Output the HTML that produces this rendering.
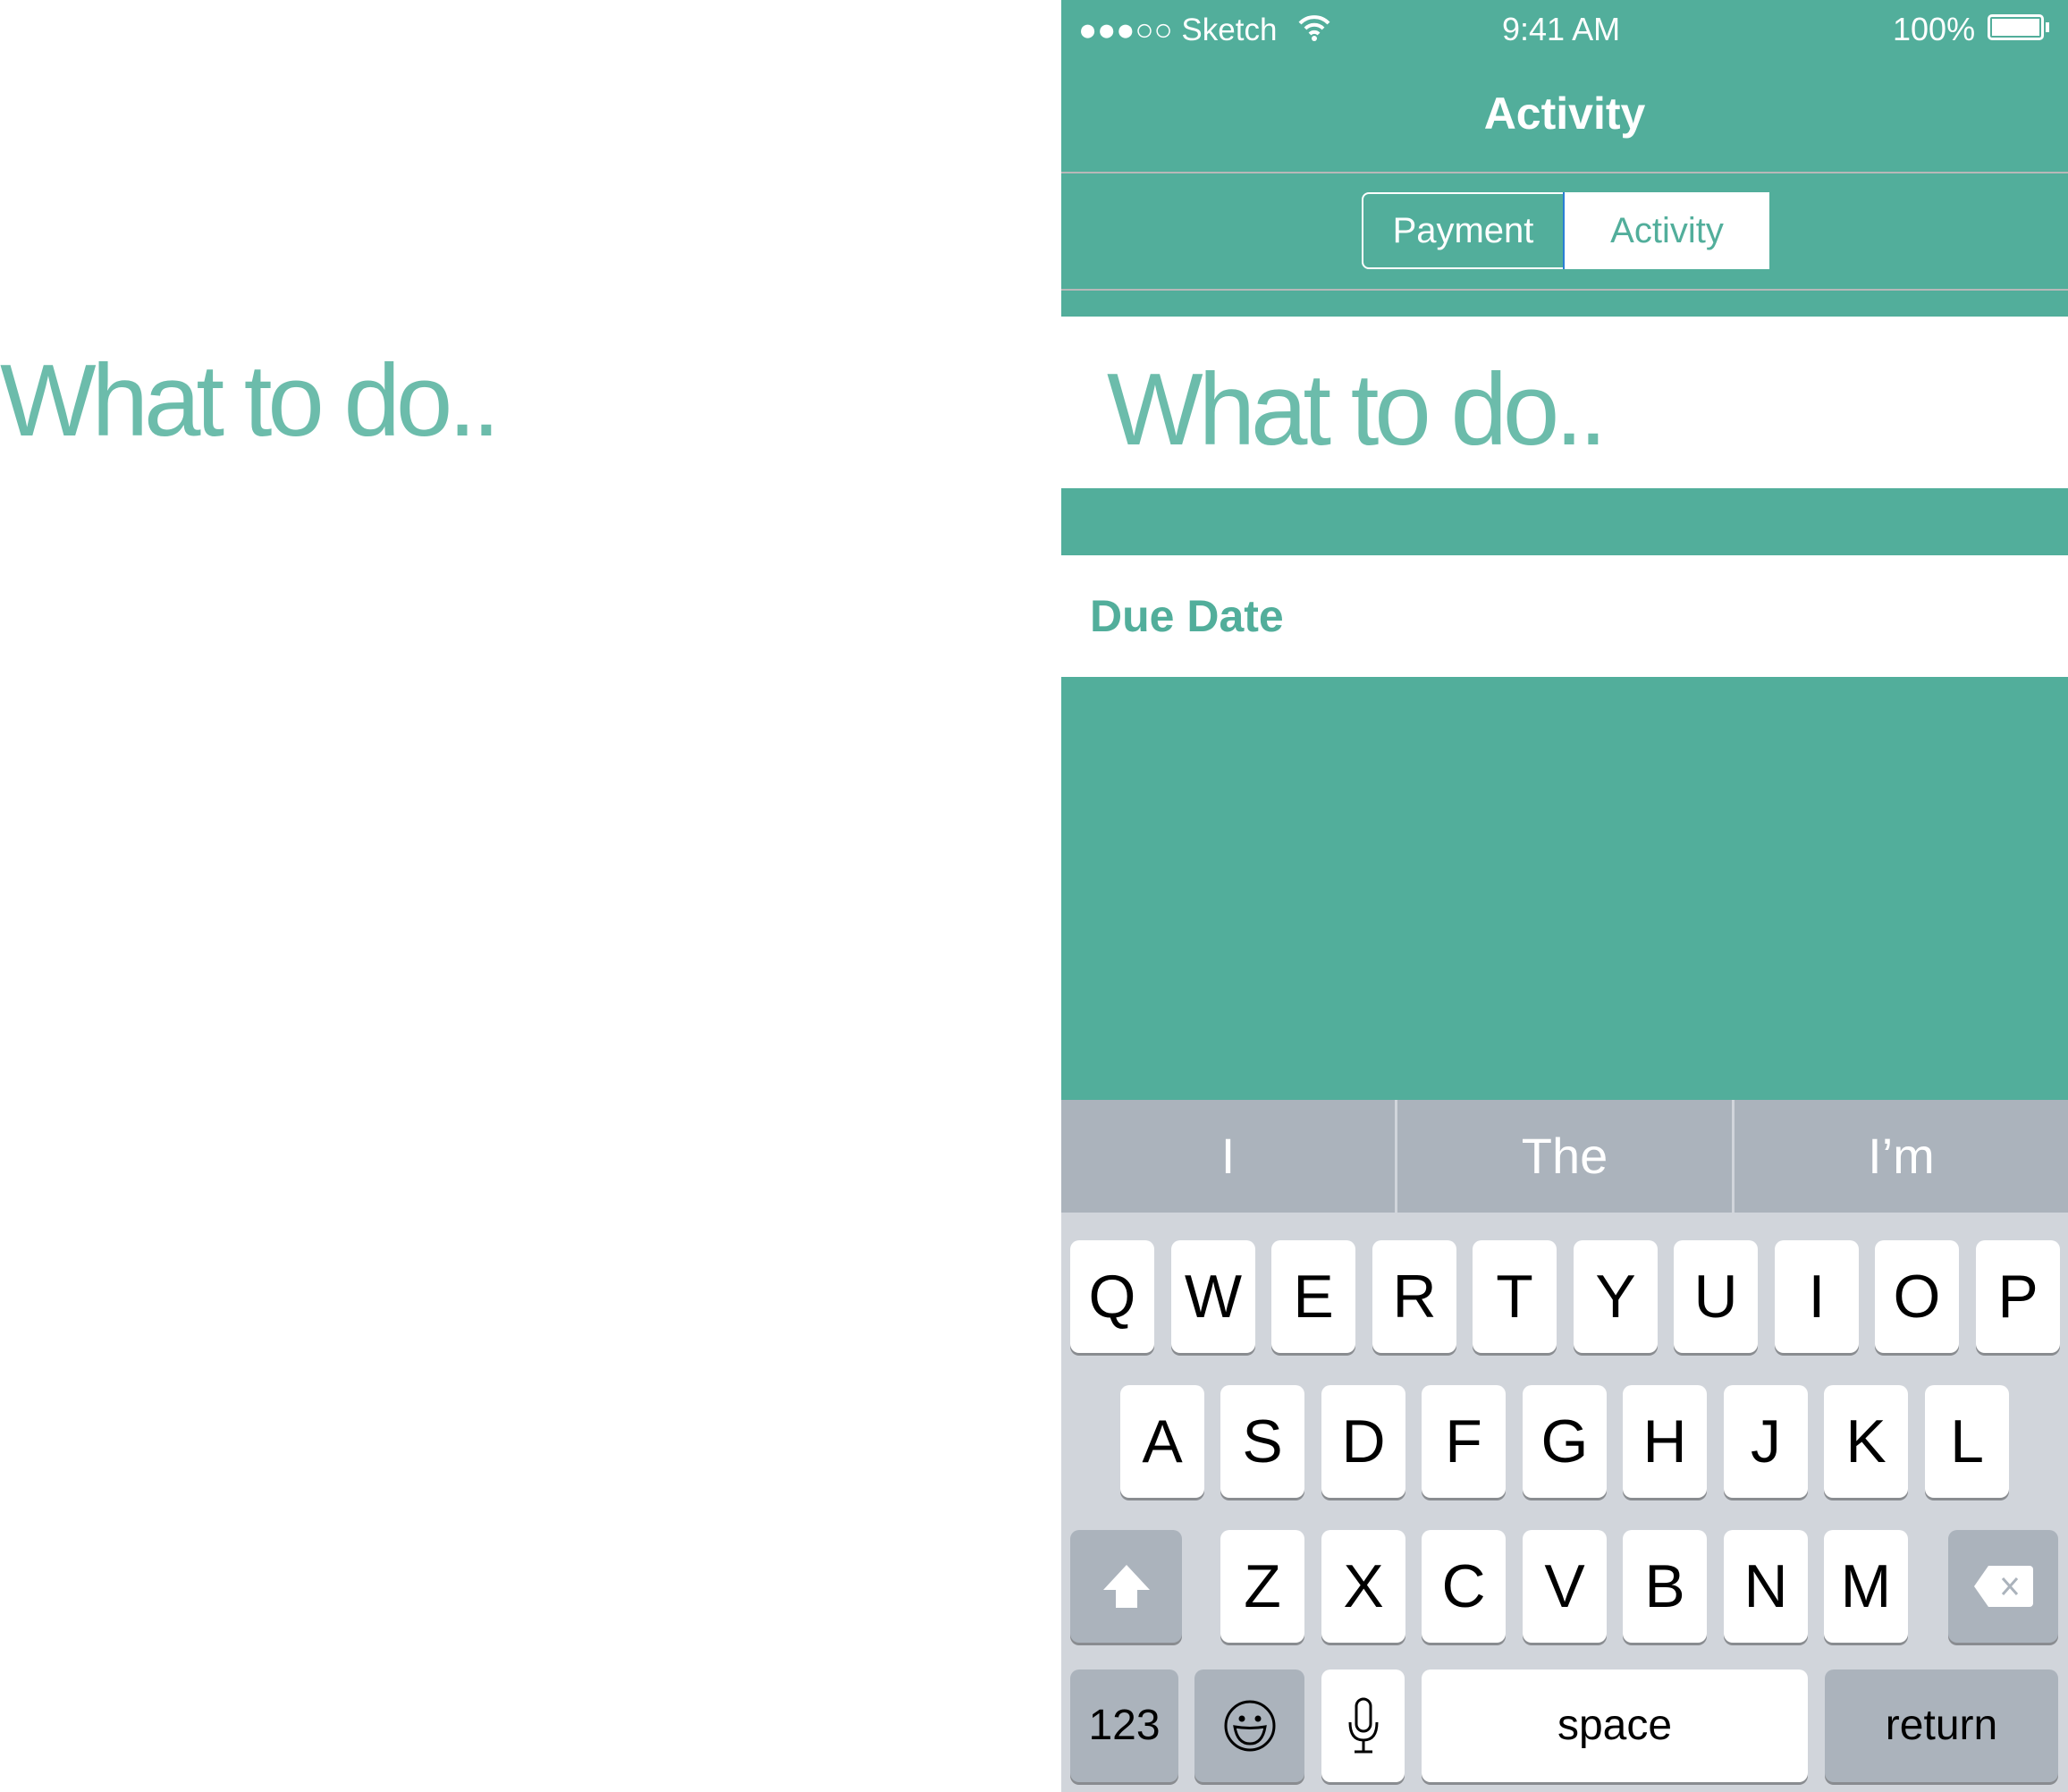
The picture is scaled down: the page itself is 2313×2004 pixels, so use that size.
<!DOCTYPE html>
<html><head><meta charset="utf-8"><style>
*{margin:0;padding:0;box-sizing:border-box}
body{width:2313px;height:2004px;position:relative;background:#fff;font-family:"Liberation Sans",sans-serif;overflow:hidden}
.a{position:absolute}
.g{background:#52AE9B}
.k{position:absolute;width:94px;height:126px;background:#fff;border-radius:10px;box-shadow:0 3px 0 #898c90;font-size:68px;color:#000;text-align:center;line-height:126px}
.d{background:#abb3bc}
.sug{position:absolute;top:1230px;height:126px;line-height:126px;color:#fff;font-size:56px;text-align:center}
.big{font-size:114px;color:#6cbcab;letter-spacing:-5px;line-height:1}
</style></head><body>
<div class="a big" style="left:0;top:392px">What to do..</div>

<div class="a g" style="left:1187px;top:0;width:1126px;height:354px"></div>
<div class="a" style="left:1206px;top:14px;font-size:35px;color:#fff">●●●○○ Sketch</div>
<svg class="a" style="left:1450px;top:16px" width="40" height="30" viewBox="0 0 40 30"><path d="M4 10a22 22 0 0 1 32 0M10 16a14 14 0 0 1 20 0M15 22a7 7 0 0 1 10 0" stroke="#fff" stroke-width="4" fill="none"/><circle cx="20" cy="27" r="3" fill="#fff"/></svg>
<div class="a" style="left:1680px;top:12px;font-size:36px;color:#fff">9:41 AM</div>
<div class="a" style="left:2117px;top:12px;font-size:36px;color:#fff">100%</div>
<div class="a" style="left:2223px;top:16px;width:63px;height:29px;border:3px solid #fff;border-radius:5px;padding:2px"><div style="background:#fff;width:100%;height:100%"></div></div>
<div class="a" style="left:2288px;top:25px;width:4px;height:11px;background:#fff"></div>
<div class="a" style="left:1187px;top:98px;width:1126px;text-align:center;font-size:50px;color:#fff;font-weight:bold">Activity</div>
<div class="a" style="left:1187px;top:192px;width:1126px;height:2px;background:#b8b8b8"></div>
<div class="a" style="left:1187px;top:323px;width:1126px;height:2px;background:#b8b8b8"></div>
<div class="a" style="left:1523px;top:215px;width:456px;height:86px;border:2px solid #fff;border-radius:8px"></div>
<div class="a" style="left:1748px;top:215px;width:231px;height:86px;background:#fff;border-left:2px solid #2a7fd4"></div>
<div class="a" style="left:1523px;top:215px;width:227px;height:86px;line-height:86px;text-align:center;color:#fff;font-size:40px">Payment</div>
<div class="a" style="left:1750px;top:215px;width:229px;height:86px;line-height:86px;text-align:center;color:#52AE9B;font-size:40px">Activity</div>

<div class="a big" style="left:1238px;top:402px">What to do..</div>
<div class="a g" style="left:1187px;top:546px;width:1126px;height:75px"></div>
<div class="a" style="left:1219px;top:660px;font-size:50px;color:#52AE9B;font-weight:bold">Due Date</div>
<div class="a g" style="left:1187px;top:757px;width:1126px;height:473px"></div>

<div class="a" style="left:1187px;top:1230px;width:1126px;height:774px;background:#d1d5db"></div>
<div class="a" style="left:1187px;top:1230px;width:1126px;height:126px;background:#abb3bc"></div>
<div class="a" style="left:1560px;top:1230px;width:3px;height:126px;background:#d1d5db"></div>
<div class="a" style="left:1937px;top:1230px;width:3px;height:126px;background:#d1d5db"></div>
<div class="sug" style="left:1187px;width:373px">I</div>
<div class="sug" style="left:1563px;width:374px">The</div>
<div class="sug" style="left:1940px;width:373px">I’m</div>

<div class="k" style="left:1197px;top:1387px">Q</div>
<div class="k" style="left:1310px;top:1387px">W</div>
<div class="k" style="left:1422px;top:1387px">E</div>
<div class="k" style="left:1535px;top:1387px">R</div>
<div class="k" style="left:1647px;top:1387px">T</div>
<div class="k" style="left:1760px;top:1387px">Y</div>
<div class="k" style="left:1872px;top:1387px">U</div>
<div class="k" style="left:1985px;top:1387px">I</div>
<div class="k" style="left:2097px;top:1387px">O</div>
<div class="k" style="left:2210px;top:1387px">P</div>

<div class="k" style="left:1253px;top:1549px">A</div>
<div class="k" style="left:1365px;top:1549px">S</div>
<div class="k" style="left:1478px;top:1549px">D</div>
<div class="k" style="left:1590px;top:1549px">F</div>
<div class="k" style="left:1703px;top:1549px">G</div>
<div class="k" style="left:1815px;top:1549px">H</div>
<div class="k" style="left:1928px;top:1549px">J</div>
<div class="k" style="left:2040px;top:1549px">K</div>
<div class="k" style="left:2153px;top:1549px">L</div>

<div class="k d" style="left:1197px;top:1711px;width:125px"><svg width="60" height="52" viewBox="0 0 60 52" style="margin-top:37px"><path d="M30 2L56 30H42V50H18V30H4Z" fill="#fff"/></svg></div>
<div class="k" style="left:1365px;top:1711px">Z</div>
<div class="k" style="left:1478px;top:1711px">X</div>
<div class="k" style="left:1590px;top:1711px">C</div>
<div class="k" style="left:1703px;top:1711px">V</div>
<div class="k" style="left:1815px;top:1711px">B</div>
<div class="k" style="left:1928px;top:1711px">N</div>
<div class="k" style="left:2040px;top:1711px">M</div>
<div class="k d" style="left:2179px;top:1711px;width:123px"><svg width="70" height="50" viewBox="0 0 70 50" style="margin-top:38px"><path d="M18 2H64a4 4 0 0 1 4 4V44a4 4 0 0 1-4 4H18L2 25Z" fill="#fff"/><path d="M34 16L50 34M50 16L34 34" stroke="#abb3bc" stroke-width="3"/></svg></div>

<div class="k d" style="left:1197px;top:1867px;width:121px;font-size:48px">123</div>
<div class="k d" style="left:1336px;top:1867px;width:123px"><svg width="60" height="60" viewBox="0 0 60 60" style="margin-top:33px"><circle cx="30" cy="30" r="27" fill="none" stroke="#000" stroke-width="3"/><circle cx="21" cy="22" r="3.5"/><circle cx="39" cy="22" r="3.5"/><path d="M13 31Q30 34 47 31Q44 50 30 50Q16 50 13 31Z" fill="none" stroke="#000" stroke-width="3"/></svg></div>
<div class="k" style="left:1478px;top:1867px;width:93px"><svg width="36" height="64" viewBox="0 0 36 64" style="margin-top:31px"><rect x="10" y="2" width="16" height="36" rx="8" fill="none" stroke="#000" stroke-width="3"/><path d="M3 28Q3 48 18 48Q33 48 33 28M18 48V60M8 61H28" fill="none" stroke="#000" stroke-width="3"/></svg></div>
<div class="k" style="left:1590px;top:1867px;width:432px;font-size:48px">space</div>
<div class="k d" style="left:2041px;top:1867px;width:261px;font-size:48px">return</div>
</body></html>
